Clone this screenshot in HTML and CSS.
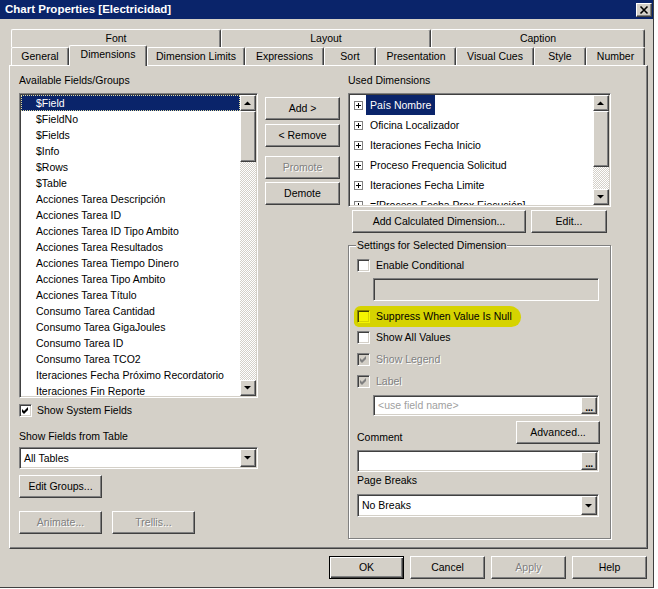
FILE: index.html
```html
<!DOCTYPE html>
<html>
<head>
<meta charset="utf-8">
<title>Chart Properties</title>
<link rel="stylesheet" href="styles.css">
</head>
<body>
<div class="dialog">
  <div class="titlebar">
    <span class="title">Chart Properties [Electricidad]</span>
    <span class="close raised"><svg width="12" height="10" viewBox="0 0 12 10"><path d="M2.5 1.5 L9.5 8.5 M9.5 1.5 L2.5 8.5" stroke="#000" stroke-width="1.6" fill="none"/></svg></span>
  </div>

  <div class="tabs">
    <div class="tabrow">
      <div class="tab w-font">Font</div>
      <div class="tab w-layout">Layout</div>
      <div class="tab w-caption">Caption</div>
    </div>
    <div class="tabrow">
      <div class="tab w-general">General</div>
      <div class="tab sel w-dim">Dimensions</div>
      <div class="tab w-dimlim">Dimension Limits</div>
      <div class="tab w-expr">Expressions</div>
      <div class="tab w-sort">Sort</div>
      <div class="tab w-pres">Presentation</div>
      <div class="tab w-vis">Visual Cues</div>
      <div class="tab w-style">Style</div>
      <div class="tab w-num">Number</div>
    </div>
  </div>

  <div class="panel">
    <div class="col-left">
      <div class="lbl">Available Fields/Groups</div>
      <div class="listbox sunken list-avail">
        <div class="items">
          <div class="item sel">$Field</div>
          <div class="item">$FieldNo</div>
          <div class="item">$Fields</div>
          <div class="item">$Info</div>
          <div class="item">$Rows</div>
          <div class="item">$Table</div>
          <div class="item">Acciones Tarea Descripción</div>
          <div class="item">Acciones Tarea ID</div>
          <div class="item">Acciones Tarea ID Tipo Ambito</div>
          <div class="item">Acciones Tarea Resultados</div>
          <div class="item">Acciones Tarea Tiempo Dinero</div>
          <div class="item">Acciones Tarea Tipo Ambito</div>
          <div class="item">Acciones Tarea Título</div>
          <div class="item">Consumo Tarea Cantidad</div>
          <div class="item">Consumo Tarea GigaJoules</div>
          <div class="item">Consumo Tarea ID</div>
          <div class="item">Consumo Tarea TCO2</div>
          <div class="item">Iteraciones Fecha Próximo Recordatorio</div>
          <div class="item">Iteraciones Fin Reporte</div>
        </div>
        <div class="vscroll">
          <div class="sbtn raised"><svg width="14" height="14" viewBox="0 0 14 14"><polygon points="3,9 10,9 6.5,5.5" fill="#000"/></svg></div>
          <div class="thumb raised thumb-avail"></div>
          <div class="track"></div>
          <div class="sbtn raised"><svg width="14" height="14" viewBox="0 0 14 14"><polygon points="3,5 10,5 6.5,8.5" fill="#000"/></svg></div>
        </div>
      </div>
      <div class="check show-sys">
        <span class="cb"><svg width="9" height="9" viewBox="0 0 9 9"><polygon points="1,3 3,5 7,1 7,4 3,8 1,6" fill="#000"/></svg></span>
        <span>Show System Fields</span>
      </div>
      <div class="lbl lbl-table">Show Fields from Table</div>
      <div class="combo sunken combo-table">
        <div class="combo-text">All Tables</div>
        <div class="combo-btn raised"><svg width="14" height="14" viewBox="0 0 14 14"><polygon points="3,5 10,5 6.5,8.5" fill="#000"/></svg></div>
      </div>
      <div class="btn raised editgroups">Edit Groups...</div>
      <div class="btnrow">
        <div class="btn raised disabled w83">Animate...</div>
        <div class="btn raised disabled w83">Trellis...</div>
      </div>
    </div>

    <div class="col-mid">
      <div class="btn raised">Add &gt;</div>
      <div class="btn raised m-remove">&lt; Remove</div>
      <div class="btn raised disabled m-promote">Promote</div>
      <div class="btn raised m-demote">Demote</div>
    </div>

    <div class="col-right">
      <div class="lbl">Used Dimensions</div>
      <div class="listbox sunken list-used">
        <div class="items">
          <div class="uitem"><svg class="plus" width="9" height="9" viewBox="0 0 9 9"><rect x="0.5" y="0.5" width="8" height="8" fill="#fff" stroke="#808080"/><path d="M2 4.5h5M4.5 2v5" stroke="#000"/></svg><span class="txt sel">País Nombre</span></div>
          <div class="uitem"><svg class="plus" width="9" height="9" viewBox="0 0 9 9"><rect x="0.5" y="0.5" width="8" height="8" fill="#fff" stroke="#808080"/><path d="M2 4.5h5M4.5 2v5" stroke="#000"/></svg><span class="txt">Oficina Localizador</span></div>
          <div class="uitem"><svg class="plus" width="9" height="9" viewBox="0 0 9 9"><rect x="0.5" y="0.5" width="8" height="8" fill="#fff" stroke="#808080"/><path d="M2 4.5h5M4.5 2v5" stroke="#000"/></svg><span class="txt">Iteraciones Fecha Inicio</span></div>
          <div class="uitem"><svg class="plus" width="9" height="9" viewBox="0 0 9 9"><rect x="0.5" y="0.5" width="8" height="8" fill="#fff" stroke="#808080"/><path d="M2 4.5h5M4.5 2v5" stroke="#000"/></svg><span class="txt">Proceso Frequencia Solicitud</span></div>
          <div class="uitem"><svg class="plus" width="9" height="9" viewBox="0 0 9 9"><rect x="0.5" y="0.5" width="8" height="8" fill="#fff" stroke="#808080"/><path d="M2 4.5h5M4.5 2v5" stroke="#000"/></svg><span class="txt">Iteraciones Fecha Limite</span></div>
          <div class="uitem"><svg class="plus" width="9" height="9" viewBox="0 0 9 9"><rect x="0.5" y="0.5" width="8" height="8" fill="#fff" stroke="#808080"/><path d="M2 4.5h5M4.5 2v5" stroke="#000"/></svg><span class="txt">=[Proceso Fecha Prox Ejecución]</span></div>
        </div>
        <div class="vscroll">
          <div class="sbtn raised"><svg width="14" height="14" viewBox="0 0 14 14"><polygon points="3,9 10,9 6.5,5.5" fill="#000"/></svg></div>
          <div class="thumb raised thumb-used"></div>
          <div class="track"></div>
          <div class="sbtn raised"><svg width="14" height="14" viewBox="0 0 14 14"><polygon points="3,5 10,5 6.5,8.5" fill="#000"/></svg></div>
        </div>
      </div>
      <div class="calcrow">
        <div class="btn raised w-calc">Add Calculated Dimension...</div>
        <div class="btn raised w-edit">Edit...</div>
      </div>

      <div class="group">
        <div class="legend">Settings for Selected Dimension</div>
        <div class="check g-enable">
          <span class="cb"></span><span>Enable Conditional</span>
        </div>
        <div class="sunken g-tb1"></div>
        <div class="check hl">
          <span class="cb"></span><span>Suppress When Value Is Null</span>
        </div>
        <div class="check g-all">
          <span class="cb"></span><span>Show All Values</span>
        </div>
        <div class="check g-legend">
          <span class="cb off"><svg width="9" height="9" viewBox="0 0 9 9"><polygon points="1,3 3,5 7,1 7,4 3,8 1,6" fill="#808080"/></svg></span><span class="dis">Show Legend</span>
        </div>
        <div class="check g-label">
          <span class="cb off"><svg width="9" height="9" viewBox="0 0 9 9"><polygon points="1,3 3,5 7,1 7,4 3,8 1,6" fill="#808080"/></svg></span><span class="dis">Label</span>
        </div>
        <div class="sunken field g-tb2">
          <div class="field-text ph">&lt;use field name&gt;</div>
          <div class="dots raised">...</div>
        </div>
        <div class="adv-row">
          <div class="lbl">Comment</div>
          <div class="btn raised w-adv">Advanced...</div>
        </div>
        <div class="sunken field g-comment">
          <div class="field-text"></div>
          <div class="dots raised">...</div>
        </div>
        <div class="lbl g-pb">Page Breaks</div>
        <div class="combo sunken g-combo">
          <div class="combo-text">No Breaks</div>
          <div class="combo-btn raised"><svg width="14" height="14" viewBox="0 0 14 14"><polygon points="3,5 10,5 6.5,8.5" fill="#000"/></svg></div>
        </div>
      </div>
    </div>
  </div>

  <div class="footer">
    <div class="btn default w75">OK</div>
    <div class="btn raised w75">Cancel</div>
    <div class="btn raised disabled w75">Apply</div>
    <div class="btn raised w75">Help</div>
  </div>
</div>
</body>
</html>
```

FILE: styles.css
```css
* { box-sizing: border-box; }
html, body { margin: 0; padding: 0; }
body {
  background: #ffffff;
  font-family: "Liberation Sans", Arial, sans-serif;
  font-size: 10.5px;
  line-height: 13px;
  color: #000;
}
.dialog {
  width: 654px;
  height: 588px;
  background: #d4d0c8;
  border-right: 1px solid #404040;
  border-bottom: 1px solid #404040;
  display: flex;
  flex-direction: column;
  overflow: hidden;
}
.titlebar {
  flex: none;
  height: 19px;
  background: #0a246a;
  display: flex;
  align-items: center;
  justify-content: space-between;
  padding: 0 1px 0 5px;
}
.title {
  color: #fff;
  font-weight: bold;
  font-size: 11.5px;
  white-space: nowrap;
}
.close {
  width: 16px;
  height: 14px;
  display: flex;
  align-items: center;
  justify-content: center;
}
.raised {
  background: #d4d0c8;
  border: 1px solid;
  border-color: #fff #404040 #404040 #fff;
  box-shadow: inset -1px -1px #808080;
}
.sunken {
  border: 1px solid;
  border-color: #808080 #fff #fff #808080;
  box-shadow: inset 1px 1px #404040, inset -1px -1px #d4d0c8;
  padding: 1px;
}

/* tabs */
.tabs { flex: none; margin-top: 10px; padding-left: 11px; }
.tabrow { display: flex; height: 18px; }
.tab {
  flex: none;
  height: 18px;
  background: #d4d0c8;
  border-top: 1px solid #fff;
  border-left: 1px solid #fff;
  border-right: 1px solid #404040;
  box-shadow: inset -1px 0 #808080;
  border-radius: 2px 2px 0 0;
  text-align: center;
  line-height: 17px;
  white-space: nowrap;
}
.tab.sel {
  height: 21px;
  margin-top: -2px;
  position: relative;
  z-index: 1;
}
.w-font { width: 210px; }
.w-layout { width: 210px; }
.w-caption { width: 214px; }
.w-general { width: 58px; }
.w-dim { width: 78px; }
.w-dimlim { width: 98px; }
.w-expr { width: 79px; }
.w-sort { width: 52px; }
.w-pres { width: 80px; }
.w-vis { width: 78px; }
.w-style { width: 52px; }
.w-num { width: 59px; }

/* panel */
.panel {
  flex: none;
  margin-left: 9px;
  width: 639px;
  height: 484px;
  border: 1px solid;
  border-color: #fff #404040 #404040 #fff;
  box-shadow: inset -1px -1px #808080;
  display: flex;
}
.col-left {
  margin-left: 9px;
  width: 239px;
  padding-top: 8px;
  display: flex;
  flex-direction: column;
}
.col-mid {
  margin-left: 7px;
  width: 75px;
  padding-top: 31px;
  display: flex;
  flex-direction: column;
}
.col-right {
  margin-left: 8px;
  width: 263px;
  padding-top: 8px;
  display: flex;
  flex-direction: column;
}
.lbl { height: 13px; white-space: nowrap; }

/* lists */
.listbox { display: flex; background: #fff; flex: none; }
.list-avail { margin-top: 6px; height: 305px; }
.list-used { margin-top: 6px; height: 114px; }
.items { flex: 1; min-width: 0; overflow: hidden; }
.item {
  height: 16px;
  line-height: 16px;
  padding-left: 15px;
  white-space: nowrap;
}
.item.sel {
  background: #0a246a;
  color: #fff;
  outline: 1px dotted #e0dca0;
  outline-offset: -1px;
}
.uitem {
  height: 20px;
  display: flex;
  align-items: center;
  padding-left: 4px;
  white-space: nowrap;
}
.uitem .plus { flex: none; margin-right: 3px; }
.uitem .txt { padding: 0 4px; line-height: 20px; }
.uitem .txt.sel { background: #0a246a; color: #fff; }
.vscroll { width: 16px; flex: none; display: flex; flex-direction: column; }
.sbtn {
  height: 16px;
  flex: none;
  display: flex;
  align-items: center;
  justify-content: center;
}
.thumb { flex: none; }
.thumb-avail { height: 51px; }
.thumb-used { height: 56px; }
.track {
  flex: 1;
  background-color: #fff;
  background-image: conic-gradient(#d4d0c8 25%, #fff 0 50%, #d4d0c8 0 75%, #fff 0);
  background-size: 2px 2px;
}

/* checkboxes */
.check {
  display: flex;
  align-items: center;
  height: 13px;
  gap: 6px;
  white-space: nowrap;
  flex: none;
}
.cb {
  width: 13px;
  height: 13px;
  flex: none;
  border: 1px solid;
  border-color: #808080 #fff #fff #808080;
  box-shadow: inset 1px 1px #404040, inset -1px -1px #d4d0c8;
  background: #fff;
  display: flex;
  align-items: center;
  justify-content: center;
}
.cb.off { background: #d4d0c8; }
.dis, .disabled { color: #808080; text-shadow: 1px 1px #fff; }
.show-sys { margin-top: 6px; gap: 5px; }
.lbl-table { margin-top: 13px; }

/* combo & fields */
.combo { display: flex; background: #fff; flex: none; }
.combo-table { margin-top: 4px; height: 22px; }
.combo-text { flex: 1; padding-left: 3px; line-height: 18px; white-space: nowrap; }
.combo-btn {
  width: 16px;
  flex: none;
  display: flex;
  align-items: center;
  justify-content: center;
}
.field { display: flex; background: #fff; flex: none; }
.field-text { flex: 1; padding-left: 3px; line-height: 17px; white-space: nowrap; }
.ph { color: #a0a0a0; }
.dots {
  width: 16px;
  flex: none;
  display: flex;
  align-items: flex-end;
  justify-content: center;
  font-weight: bold;
  line-height: 11px;
  letter-spacing: -0.5px;
}

/* buttons */
.btn {
  height: 23px;
  flex: none;
  display: flex;
  align-items: center;
  justify-content: center;
  white-space: nowrap;
}
.editgroups { margin-top: 6px; width: 83px; }
.btnrow { margin-top: 13px; display: flex; gap: 10px; }
.w83 { width: 83px; }
.m-remove { margin-top: 4px; }
.m-promote { margin-top: 9px; }
.m-demote { margin-top: 3px; }
.calcrow { margin-top: 3px; display: flex; padding-left: 4px; gap: 5px; }
.w-calc { width: 174px; }
.w-edit { width: 76px; }
.w-adv { width: 84px; margin-right: -1px; }

/* group box */
.group {
  margin-top: 12px;
  height: 294px;
  flex: none;
  border: 1px solid #808080;
  box-shadow: inset 1px 1px #fff, 1px 1px #fff;
  padding: 0 11px 0 8px;
  display: flex;
  flex-direction: column;
}
.legend {
  margin-top: -7px;
  margin-left: -1px;
  align-self: flex-start;
  padding: 0 1px;
  background: #d4d0c8;
  height: 13px;
  white-space: nowrap;
}
.g-enable { margin-top: 7px; }
.g-tb1 { margin-top: 6px; margin-left: 16px; height: 23px; background: #d4d0c8; flex: none; }
.hl {
  margin-top: 5px;
  margin-left: -3px;
  height: 21px;
  padding: 0 9px 0 3px;
  align-self: flex-start;
  background: #d6d300;
  border-radius: 7px 12px 10px 5px;
}
.hl .cb { background: #f5f500; border-color: #8a8600 #f5f500 #f5f500 #8a8600; box-shadow: inset 1px 1px #454200, inset -1px -1px #d6d300; }
.g-all { margin-top: 4px; }
.g-legend { margin-top: 9px; }
.g-label { margin-top: 9px; }
.g-tb2 { margin-top: 7px; margin-left: 16px; height: 21px; }
.adv-row {
  margin-top: 5px;
  height: 23px;
  flex: none;
  display: flex;
  justify-content: space-between;
  align-items: flex-end;
}
.g-comment { margin-top: 6px; height: 22px; }
.g-pb { margin-top: 2px; }
.g-combo { margin-top: 7px; height: 23px; }

/* footer */
.footer {
  flex: none;
  margin-top: 7px;
  display: flex;
  justify-content: flex-end;
  gap: 6px;
  padding-right: 6px;
}
.w75 { width: 75px; }
.default {
  background: #d4d0c8;
  border: 1px solid #000;
  box-shadow: inset 1px 1px #fff, inset -1px -1px #404040, inset -2px -2px #808080;
}
```
